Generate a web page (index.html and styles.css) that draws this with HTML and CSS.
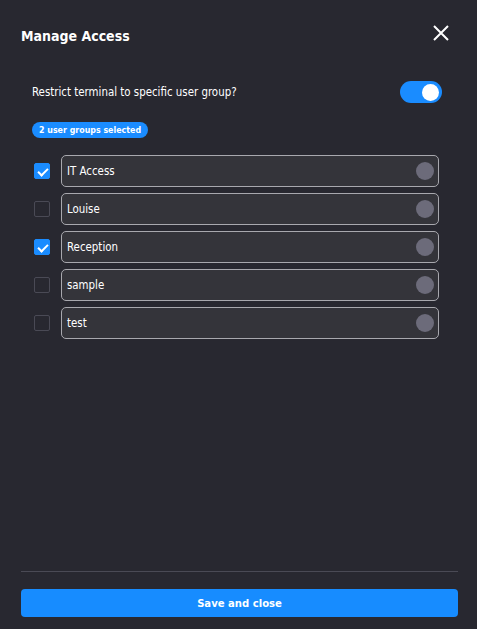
FILE: index.html
```html
<!DOCTYPE html>
<html lang="en">
<head>
    <meta charset="UTF-8">
    <title>Manage Access</title>
    <link rel="stylesheet" href="styles.css">
</head>
<body>

<div class="modal">
    <div class="modal-header">
        <h2>Manage Access</h2>
        <button class="close-btn" type="button" aria-label="Close">
            <svg width="18" height="18" viewBox="0 0 18 18">
                <path d="M2 1 L16 15 M16 1 L2 15" stroke="#fff" stroke-width="2" fill="none"/>
            </svg>
        </button>
    </div>

    <div class="modal-body">
        <div class="restrict-row">
            <span>Restrict terminal to specific user group?</span>
            <span class="toggle on"><span class="knob"></span></span>
        </div>

        <span class="badge">2 user groups selected</span>

        <!-- user group list -->
        <ul class="group-list">
            <li class="group-item">
                <span class="check checked"></span>
                <div class="group-box"><span>IT Access</span><span class="dot"></span></div>
            </li>
            <li class="group-item">
                <span class="check"></span>
                <div class="group-box"><span>Louise</span><span class="dot"></span></div>
            </li>
            <li class="group-item">
                <span class="check checked"></span>
                <div class="group-box"><span>Reception</span><span class="dot"></span></div>
            </li>
            <li class="group-item">
                <span class="check"></span>
                <div class="group-box"><span>sample</span><span class="dot"></span></div>
            </li>
            <li class="group-item">
                <span class="check"></span>
                <div class="group-box"><span>test</span><span class="dot"></span></div>
            </li>
        </ul>
    </div>

    <div class="modal-footer">
        <button class="save-btn" type="button">Save and close</button>
    </div>
</div>

</body>
</html>
```

FILE: styles.css
```css
html, body {
    height: 100%;
}
body {
    margin: 0;
    background-color: #282830;
    font-family: "DejaVu Sans Condensed", "DejaVu Sans", sans-serif;
    color: #fff;
}
.modal {
    height: 100%;
    box-sizing: border-box;
    padding: 0 19px 12px 21px;
    display: flex;
    flex-direction: column;
}
.modal-header {
    display: flex;
    justify-content: space-between;
    align-items: center;
    padding-top: 24px;
}
.modal-header h2 {
    margin: 0;
    font-size: 14px;
    font-weight: bold;
    margin-top: 4px;
}
.close-btn {
    background: none;
    border: none;
    padding: 0;
    margin-right: 8px;
    width: 18px;
    height: 18px;
    cursor: pointer;
}
.modal-body {
    flex: 1;
    padding: 0 16px 0 11px;
}
.restrict-row {
    display: flex;
    justify-content: space-between;
    align-items: center;
    margin-top: 37px;
    font-size: 11.4px;
}
.toggle {
    width: 42px;
    height: 22px;
    border-radius: 11px;
    background-color: #1a8cff;
    display: flex;
    align-items: center;
    justify-content: flex-end;
    padding: 0 3px;
    box-sizing: border-box;
}
.knob {
    width: 17px;
    height: 17px;
    border-radius: 50%;
    background: #fff;
}
.badge {
    display: inline-block;
    margin-top: 19px;
    height: 16px;
    line-height: 16px;
    padding: 0 7px;
    border-radius: 8px;
    background-color: #1a8cff;
    font-size: 8.8px;
    font-weight: bold;
}
.group-list {
    list-style: none;
    margin: 17px 3px 0 0;
    padding: 0;
}
.group-item {
    display: flex;
    align-items: center;
    gap: 11px;
    margin-bottom: 6px;
}
.check {
    width: 16px;
    height: 16px;
    box-sizing: border-box;
    border: 1px solid #4a4a55;
    border-radius: 2px;
    margin-left: 2px;
    position: relative;
}
.check.checked {
    background-color: #1a8cff;
    border-color: #1a8cff;
}
.check.checked::after {
    content: "";
    position: absolute;
    left: 5px;
    top: 2px;
    width: 4px;
    height: 8px;
    border: solid #fff;
    border-width: 0 2px 2px 0;
    transform: rotate(45deg);
}
.group-box {
    flex: 1;
    height: 32px;
    box-sizing: border-box;
    border: 1px solid #a8a8ae;
    border-radius: 5px;
    background-color: #34343a;
    display: flex;
    align-items: center;
    justify-content: space-between;
    padding: 0 4px 0 5px;
    font-size: 11.4px;
}
.dot {
    width: 18px;
    height: 18px;
    border-radius: 50%;
    background-color: #6c6b7a;
}
.modal-footer {
    border-top: 1px solid #4a4a55;
    padding-top: 17px;
}
.save-btn {
    width: 100%;
    height: 28px;
    border: none;
    border-radius: 4px;
    background-color: #178cff;
    color: #fff;
    font-family: "DejaVu Sans Condensed", "DejaVu Sans", sans-serif;
    font-size: 11.2px;
    font-weight: bold;
    cursor: pointer;
}
```
